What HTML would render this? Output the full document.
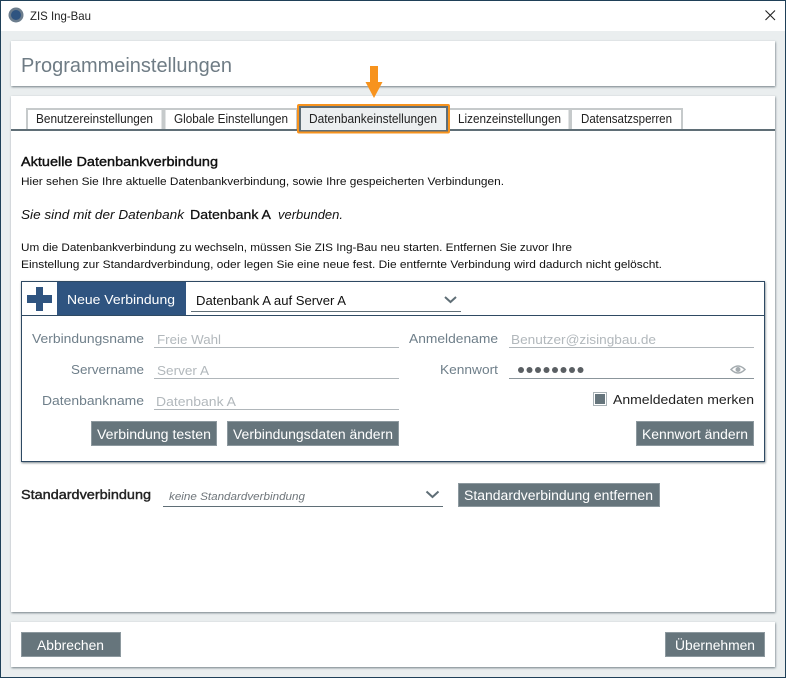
<!DOCTYPE html>
<html lang="de">
<head>
<meta charset="utf-8">
<title>ZIS Ing-Bau</title>
<style>
html,body{margin:0;padding:0;background:#fff;}
body{width:786px;height:678px;overflow:hidden;}
svg{display:block;font-family:"Liberation Sans",sans-serif;}
</style>
</head>
<body>
<svg width="786" height="678" viewBox="0 0 786 678" xmlns="http://www.w3.org/2000/svg">
<defs>
<filter id="sh" x="-3%" y="-10%" width="106%" height="125%"><feDropShadow dx="0.5" dy="1" stdDeviation="1" flood-color="#4a5a62" flood-opacity=".75"/></filter>
</defs>
<!-- window -->
<rect x="0" y="0" width="786" height="678" fill="#1f4058"/>
<rect x="1" y="1" width="784" height="676" fill="#eaeeef"/>
<rect x="1" y="1" width="784" height="30" fill="#fff"/>
<circle cx="16" cy="15" r="7.5" fill="#6c7d8d"/>
<circle cx="16" cy="15" r="5" fill="#2f5480"/>
<text x="30" y="20" font-size="12" fill="#222" textLength="61" lengthAdjust="spacingAndGlyphs">ZIS Ing-Bau</text>
<path d="M765.5 10.5L775 20M775 10.5L765.5 20" stroke="#222" stroke-width="1.1" fill="none"/>

<!-- panels -->
<rect x="11" y="41" width="764" height="45" fill="#fff" filter="url(#sh)"/>
<rect x="11" y="96" width="764" height="516" fill="#fff" filter="url(#sh)"/>
<rect x="11" y="622" width="764" height="45" fill="#fff" filter="url(#sh)"/>
<text x="21" y="72" font-size="20" fill="#6f7c85" textLength="211" lengthAdjust="spacingAndGlyphs">Programmeinstellungen</text>

<!-- arrow -->
<path d="M370 66H378V82H382.500L374 98L365.500 82H370Z" fill="#f7931e"/>

<!-- tabs -->
<path d="M27 130V109H162.500V130M164.500 130V109H297V130M449 130V109H569.500V130M571 130V109H682V130" fill="none" stroke="#c6cacb" stroke-width="2"/>
<rect x="11" y="129" width="764" height="2" fill="#5f6e76"/>
<rect x="299" y="106" width="148" height="25" fill="#eceff0"/>
<rect x="300" y="107" width="147" height="24" fill="none" stroke="#5f6e76" stroke-width="2"/>
<rect x="298" y="105" width="151" height="27.500" rx="1" fill="none" stroke="#f7931e" stroke-width="2"/>
<g font-size="12.500" fill="#222">
<text x="36" y="123" textLength="117" lengthAdjust="spacingAndGlyphs">Benutzereinstellungen</text>
<text x="174" y="123" textLength="114" lengthAdjust="spacingAndGlyphs">Globale Einstellungen</text>
<text x="309" y="123" textLength="128" lengthAdjust="spacingAndGlyphs">Datenbankeinstellungen</text>
<text x="458" y="123" textLength="103" lengthAdjust="spacingAndGlyphs">Lizenzeinstellungen</text>
<text x="581" y="123" textLength="91" lengthAdjust="spacingAndGlyphs">Datensatzsperren</text>
</g>

<!-- intro -->
<text x="21" y="166" font-size="13" fill="#111" stroke="#111" stroke-width=".4" textLength="197" lengthAdjust="spacingAndGlyphs">Aktuelle Datenbankverbindung</text>
<text x="21" y="185" font-size="11" fill="#111" textLength="483" lengthAdjust="spacingAndGlyphs">Hier sehen Sie Ihre aktuelle Datenbankverbindung, sowie Ihre gespeicherten Verbindungen.</text>
<text x="21" y="219" font-size="13" font-style="italic" fill="#111" textLength="163" lengthAdjust="spacingAndGlyphs">Sie sind mit der Datenbank</text>
<text x="190" y="219" font-size="13" fill="#111" stroke="#111" stroke-width=".25" textLength="81" lengthAdjust="spacingAndGlyphs">Datenbank A</text>
<text x="278" y="219" font-size="13" font-style="italic" fill="#111" textLength="65" lengthAdjust="spacingAndGlyphs">verbunden.</text>
<text x="21" y="251" font-size="11" fill="#111" textLength="551" lengthAdjust="spacingAndGlyphs">Um die Datenbankverbindung zu wechseln, müssen Sie ZIS Ing-Bau neu starten. Entfernen Sie zuvor Ihre</text>
<text x="21" y="268" font-size="11" fill="#111" textLength="641" lengthAdjust="spacingAndGlyphs">Einstellung zur Standardverbindung, oder legen Sie eine neue fest. Die entfernte Verbindung wird dadurch nicht gelöscht.</text>

<!-- group box -->
<rect x="21.500" y="281.500" width="743" height="180" fill="#fff" stroke="#2f4a63" filter="url(#sh)"/>
<rect x="22" y="315" width="742" height="1" fill="#2f4a63"/>
<path d="M36 287H43V295H52V303H43V311H36V303H27V295H36Z" fill="#2f5480"/>
<rect x="57" y="282" width="129" height="33" fill="#2f5480"/>
<text x="67" y="304" font-size="13" fill="#fff" textLength="108" lengthAdjust="spacingAndGlyphs">Neue Verbindung</text>
<text x="196" y="305" font-size="13" fill="#111" textLength="150" lengthAdjust="spacingAndGlyphs">Datenbank A auf Server A</text>
<rect x="191" y="311" width="270" height="1" fill="#5f6e76"/>
<path d="M445 297L450.500 302L456 297" fill="none" stroke="#5f6e76" stroke-width="2"/>

<!-- labels -->
<g font-size="13" fill="#6f7f8a">
<text x="32" y="343" textLength="112" lengthAdjust="spacingAndGlyphs">Verbindungsname</text>
<text x="71" y="374" textLength="73" lengthAdjust="spacingAndGlyphs">Servername</text>
<text x="42" y="405" textLength="102" lengthAdjust="spacingAndGlyphs">Datenbankname</text>
<text x="409" y="343" textLength="89" lengthAdjust="spacingAndGlyphs">Anmeldename</text>
<text x="440" y="374" textLength="58" lengthAdjust="spacingAndGlyphs">Kennwort</text>
</g>
<g font-size="13" fill="#b2b8bc">
<text x="157" y="344" textLength="64" lengthAdjust="spacingAndGlyphs">Freie Wahl</text>
<text x="157" y="375" textLength="52" lengthAdjust="spacingAndGlyphs">Server A</text>
<text x="156" y="406" textLength="80" lengthAdjust="spacingAndGlyphs">Datenbank A</text>
<text x="511" y="344" textLength="145" lengthAdjust="spacingAndGlyphs">Benutzer@zisingbau.de</text>
</g>
<g fill="#b0b6ba">
<rect x="154" y="347" width="245" height="1"/>
<rect x="154" y="378" width="245" height="1"/>
<rect x="154" y="409" width="245" height="1"/>
<rect x="509" y="347" width="245" height="1"/>
</g>
<rect x="509" y="378" width="245" height="1" fill="#8b959b"/>
<g fill="#5a5f63">
<circle cx="521" cy="370" r="3"/><circle cx="529.500" cy="370" r="3"/><circle cx="538" cy="370" r="3"/><circle cx="546.500" cy="370" r="3"/><circle cx="555" cy="370" r="3"/><circle cx="563.500" cy="370" r="3"/><circle cx="572" cy="370" r="3"/><circle cx="580.500" cy="370" r="3"/>
</g>
<path d="M731 369.500Q738 362.500 745 369.500Q738 376.500 731 369.500Z" fill="none" stroke="#a4abaf" stroke-width="1.500"/>
<circle cx="738" cy="369.500" r="2.500" fill="#a4abaf"/>
<rect x="593.500" y="392.500" width="13" height="13" fill="#fff" stroke="#a9b2b6"/>
<rect x="595" y="394" width="10" height="10" fill="#66757c"/>
<text x="613" y="404" font-size="13" fill="#222" textLength="141" lengthAdjust="spacingAndGlyphs">Anmeldedaten merken</text>

<!-- buttons -->
<g fill="#66757c" stroke="#8d999f" stroke-width="1">
<rect x="91.500" y="421.500" width="125" height="24"/>
<rect x="227.500" y="421.500" width="171" height="24"/>
<rect x="636.500" y="421.500" width="117" height="24"/>
<rect x="458.500" y="483.500" width="201" height="23"/>
<rect x="21.500" y="632.500" width="99" height="24"/>
<rect x="665.500" y="632.500" width="99" height="24"/>
</g>
<g font-size="13.500" fill="#fff">
<text x="97" y="439" textLength="114" lengthAdjust="spacingAndGlyphs">Verbindung testen</text>
<text x="233" y="439" textLength="160" lengthAdjust="spacingAndGlyphs">Verbindungsdaten ändern</text>
<text x="642" y="439" textLength="106" lengthAdjust="spacingAndGlyphs">Kennwort ändern</text>
<text x="464" y="500" textLength="189" lengthAdjust="spacingAndGlyphs">Standardverbindung entfernen</text>
<text x="37" y="650" textLength="67" lengthAdjust="spacingAndGlyphs">Abbrechen</text>
<text x="675" y="650" textLength="80" lengthAdjust="spacingAndGlyphs">Übernehmen</text>
</g>

<!-- standard -->
<text x="21" y="499" font-size="13" fill="#222" stroke="#222" stroke-width=".4" textLength="130" lengthAdjust="spacingAndGlyphs">Standardverbindung</text>
<text x="169" y="500" font-size="11" font-style="italic" fill="#6f767b" textLength="136" lengthAdjust="spacingAndGlyphs">keine Standardverbindung</text>
<rect x="163" y="506" width="280" height="1" fill="#5f6e76"/>
<path d="M426.500 491.500L432.500 497L438.500 491.500" fill="none" stroke="#5f6e76" stroke-width="2"/>
</svg>
</body>
</html>
